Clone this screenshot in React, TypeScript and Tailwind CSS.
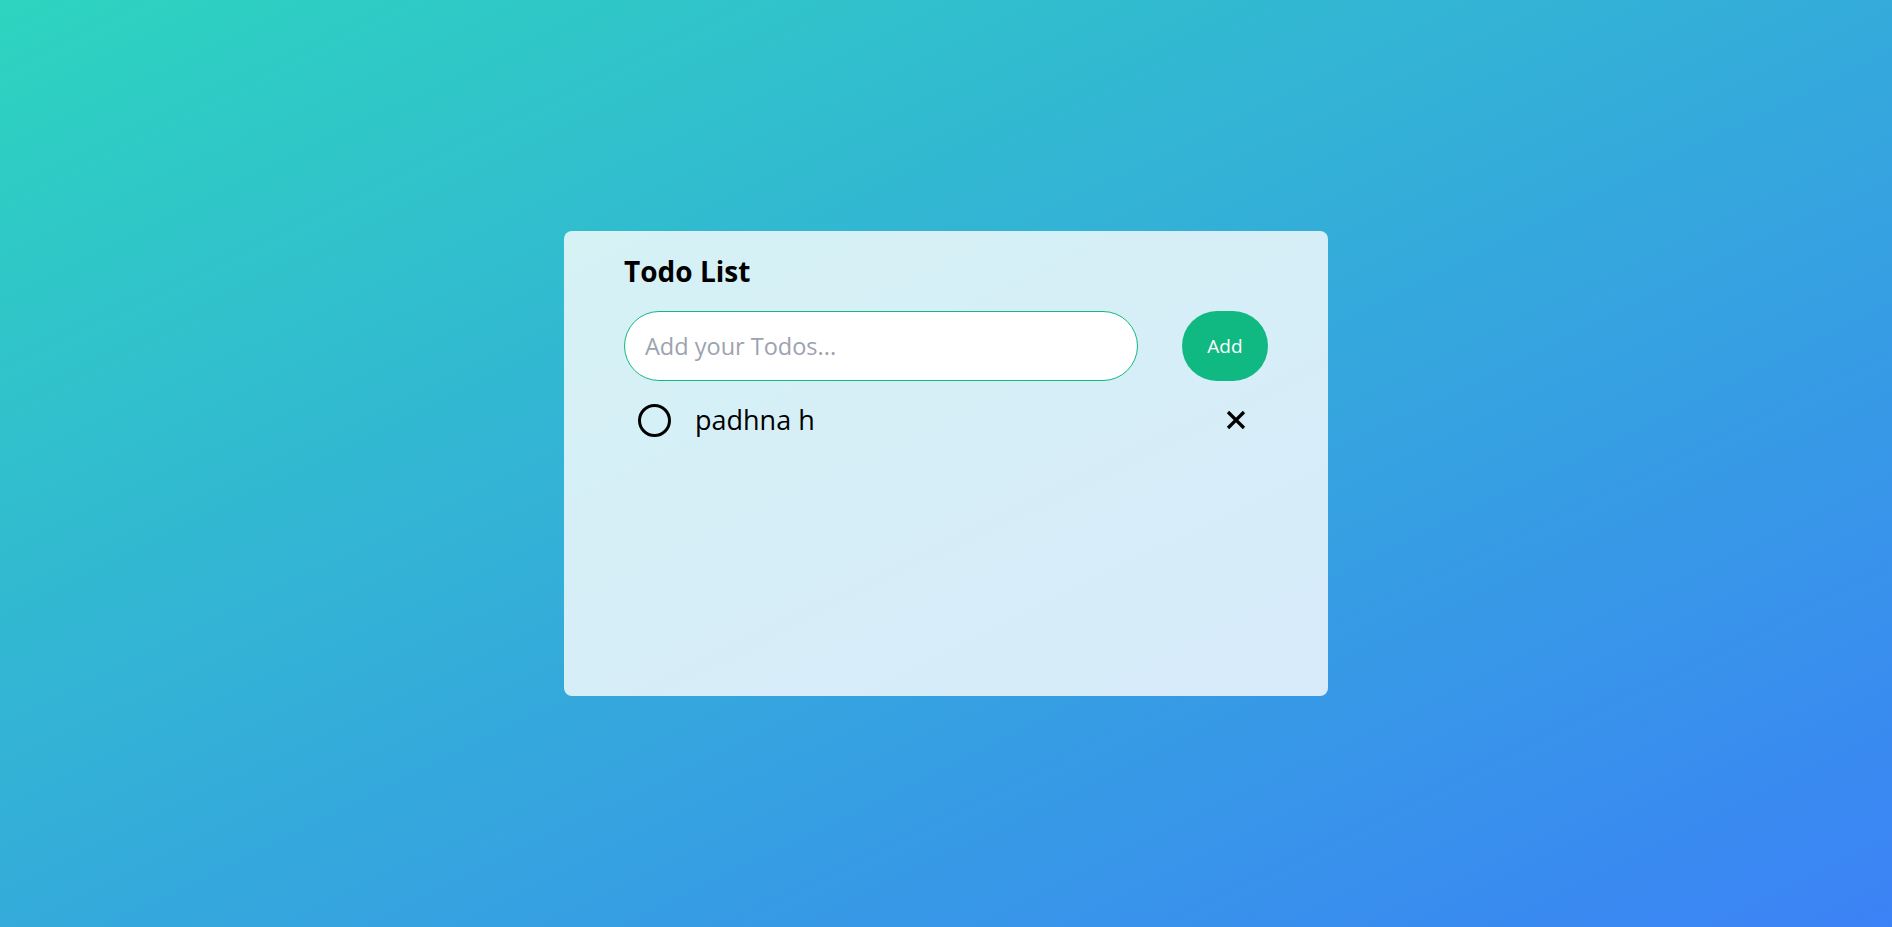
import React, { useState } from 'react';

type Todo = { id: number; text: string; done: boolean };

export default function App() {
  const [todos, setTodos] = useState<Todo[]>([{ id: 1, text: 'padhna h', done: false }]);
  const [value, setValue] = useState('');

  const addTodo = () => {
    const text = value.trim();
    if (!text) return;
    setTodos([...todos, { id: Date.now(), text, done: false }]);
    setValue('');
  };

  return (
    <div
      className="min-h-screen w-full flex items-center justify-center bg-[linear-gradient(to_bottom_right,#2dd4bf,#3b82f6)]"
      style={{ fontFamily: "'Open Sans', 'Noto Sans', sans-serif" }}
    >
      <div className="w-[764px] h-[465px] rounded-lg bg-white/80 px-[60px] pt-[22px]">
        <h1 className="text-[28px] leading-[36px] font-bold text-black">Todo List</h1>

        <div className="mt-[22px] flex items-center gap-[44px]">
          <input
            value={value}
            onChange={(e) => setValue(e.target.value)}
            placeholder="Add your Todos..."
            className="h-[70px] flex-1 rounded-full border border-[#10b981] bg-white px-5 text-[23.5px] text-black outline-none placeholder:text-[#9ca3af]"
          />
          <button
            onClick={addTodo}
            className="h-[70px] w-[86px] rounded-full bg-[#10b981] text-[19px] text-white"
          >
            Add
          </button>
        </div>

        <div className="mt-[5px] flex flex-col">
          {todos.map((todo) => (
            <div key={todo.id} className="flex items-center h-[68px] pl-[14px] pr-[22px]">
              <button
                onClick={() =>
                  setTodos(todos.map((t) => (t.id === todo.id ? { ...t, done: !t.done } : t)))
                }
                className="h-[33px] w-[33px] rounded-full border-[3px] border-black"
              />
              <span className="ml-[24px] flex-1 text-[27px] text-black">{todo.text}</span>
              <button onClick={() => setTodos(todos.filter((t) => t.id !== todo.id))}>
                <svg width="20" height="20" viewBox="0 0 20 20" fill="none">
                  <path d="M2 2 L18 18 M18 2 L2 18" stroke="black" strokeWidth="3.2" />
                </svg>
              </button>
            </div>
          ))}
        </div>
      </div>
    </div>
  );
}
